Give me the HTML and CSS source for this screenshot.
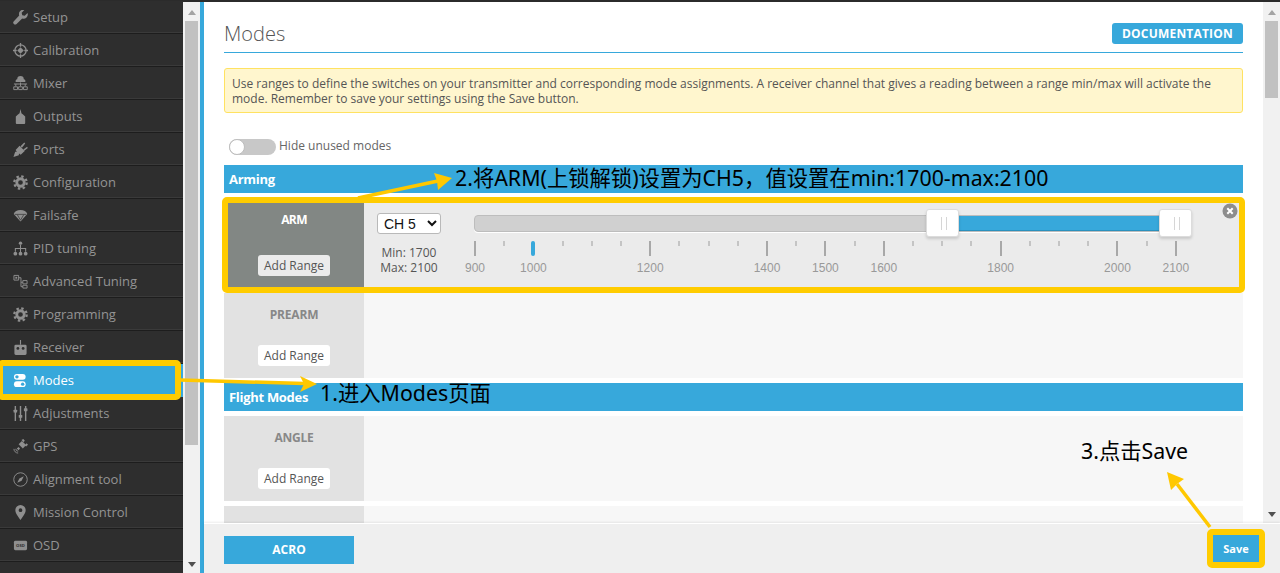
FILE: index.html
```html
<!DOCTYPE html>
<html lang="en">
<head>
<meta charset="utf-8">
<title>Modes</title>
<link rel="stylesheet" href="styles.css">
</head>
<body>
<div class="app">
  <div class="topbar"></div>
  <div class="main">
    <nav class="nav">
      <a class="item"><svg class="ico" viewBox="0 0 16 16"><path d="M15.500 3.200l-3 3-2.600-.7-.7-2.600 3-3a4.600 4.600 0 0 0-5.600 5.900L.9 11.900a2 2 0 0 0 2.900 2.900l6-5.700a4.600 4.600 0 0 0 5.700-5.900z"/></svg>Setup</a>
      <a class="item"><svg class="ico" viewBox="0 0 16 16"><circle cx="8" cy="8" r="6" class="ln" stroke-width="1.400"/><path d="M8 0v4M8 12v4M0 8h4M12 8h4" class="ln" stroke-width="1.400"/><path d="M8 4.500L11.500 8 8 11.500 4.500 8z"/></svg>Calibration</a>
      <a class="item"><svg class="ico" viewBox="0 0 16 16"><path d="M3 6.500a2 2 0 0 1 1.500-3 3.500 3.500 0 0 1 7 0 2 2 0 0 1 1.500 3z"/><path d="M1 8h14v1H1zM2.500 9h1v2h-1zM7.500 7h1v4h-1zM12.500 9h1v2h-1z"/><path d="M.8 11.500h4v3h-4zM6 11.500h4v3H6zM11.200 11.500h4v3h-4z" class="ln" stroke-width="1"/></svg>Mixer</a>
      <a class="item"><svg class="ico" viewBox="0 0 16 16"><path d="M8 0l1 4.500 2 1.500 2 2v7a1 1 0 0 1-1 1H4a1 1 0 0 1-1-1V8l2-2 2-1.500z"/></svg>Outputs</a>
      <a class="item"><svg class="ico" viewBox="0 0 16 16"><path d="M.5 16l1.800-5.500 1.800-.2L2.800 8.500 7 4l5.500 5.500-4.300 4-1.800-1.200-.2 1.800z"/><path d="M8 4.500L12 .5l1 1-3.500 4.500zM11 8l4-3 .8 1.300-3.800 3z"/></svg>Ports</a>
      <a class="item"><svg class="ico" viewBox="0 0 16 16"><circle cx="8" cy="8" r="4" class="ln" stroke-width="3"/><circle cx="8" cy="8" r="6.600" class="ln gear" stroke-width="2.400"/></svg>Configuration</a>
      <a class="item"><svg class="ico" viewBox="0 0 16 16"><path d="M.8 6.500C1.500 3.500 4.500 2 8 2s6.500 1.500 7.200 4.500L8 14.500z"/><path d="M4.500 7L8 13l3.500-6M2 6.800h12" class="ln dark" stroke-width=".7"/></svg>Failsafe</a>
      <a class="item"><svg class="ico" viewBox="0 0 16 16"><circle cx="8" cy="2.300" r="1.800"/><circle cx="2.500" cy="13.500" r="2"/><circle cx="8" cy="13.500" r="2"/><circle cx="13.500" cy="13.500" r="2"/><path d="M8 4v8M2.500 11.500V8h11v3.500" class="ln" stroke-width="1.100"/></svg>PID tuning</a>
      <a class="item"><svg class="ico" viewBox="0 0 16 16"><path d="M1 1.500h5v5H1zM10.500 7h4.500v3.500h-4.500zM10.500 12h4.500v3h-4.500z" class="ln" stroke-width="1"/><path d="M6 4h2.500v9.500h2M8.500 8.800h2" class="ln" stroke-width="1"/><path d="M2.500 3h2v2h-2z"/></svg>Advanced Tuning</a>
      <a class="item"><svg class="ico" viewBox="0 0 16 16"><circle cx="8" cy="8" r="4" class="ln" stroke-width="3"/><circle cx="8" cy="8" r="6.600" class="ln gear" stroke-width="2.400"/></svg>Programming</a>
      <a class="item"><svg class="ico" viewBox="0 0 16 16"><path d="M7.400 0h1.200v5H7.400z"/><path d="M3 5h10a1.500 1.500 0 0 1 1.500 1.500v8A1.500 1.500 0 0 1 13 16H3a1.500 1.500 0 0 1-1.500-1.500v-8A1.500 1.500 0 0 1 3 5z"/><circle cx="5.200" cy="9" r="1.500" class="hole"/><circle cx="10.800" cy="9" r="1.500" class="hole"/></svg>Receiver</a>
      <a class="item active"><svg class="ico" viewBox="0 0 16 16"><rect x="1" y="1" width="12.500" height="6.200" rx="3.100"/><circle cx="4.200" cy="4.100" r="1.800" class="hole"/><rect x="1" y="8.800" width="12.500" height="6.200" rx="3.100"/><circle cx="10.300" cy="11.900" r="1.800" class="hole"/></svg>Modes</a>
      <a class="item"><svg class="ico" viewBox="0 0 16 16"><path d="M2.500 0v16M8 0v16M13.500 0v16" class="ln" stroke-width="1.500"/><rect x=".6" y="4" width="3.800" height="3" rx=".6"/><rect x="6.100" y="9.500" width="3.800" height="3" rx=".6"/><rect x="11.600" y="2.500" width="3.800" height="3" rx=".6"/></svg>Adjustments</a>
      <a class="item"><svg class="ico" viewBox="0 0 16 16"><path d="M9.500 2L14 6.500 10.500 10 6 5.500z"/><path d="M9 1l2-1 1.500 1.500-1 2zM4 10l2-1.500L7.500 10 6 12zM12.500 7l1.500 1 2-2-1.500-1.500z"/><path d="M1 10.500A4.500 4.500 0 0 0 5.500 15M3 10.500A2.500 2.500 0 0 0 5.500 13" class="ln" stroke-width="1"/></svg>GPS</a>
      <a class="item"><svg class="ico" viewBox="0 0 16 16"><circle cx="8" cy="8" r="7.200" class="ln" stroke-width="1"/><path d="M11.500 4.500L9.200 9.200 6.800 6.800zM4.500 11.500L6.800 6.800 9.200 9.200z"/></svg>Alignment tool</a>
      <a class="item"><svg class="ico" viewBox="0 0 16 16"><path fill-rule="evenodd" d="M8 0a5.500 5.500 0 0 1 5.500 5.500C13.500 9 10 13 8 16 6 13 2.500 9 2.500 5.500A5.500 5.500 0 0 1 8 0zm0 3.500a2 2 0 1 0 0 4 2 2 0 0 0 0-4z"/></svg>Mission Control</a>
      <a class="item"><svg class="ico" viewBox="0 0 16 16"><rect x="1" y="3" width="14" height="10" rx="1.500"/><text x="8" y="9.800" class="osd">OSD</text></svg>OSD</a>
      <a class="item"><svg class="ico" viewBox="0 0 16 16"><path d="M8 8a3 3 0 0 1 3 3v5H5v-5a3 3 0 0 1 3-3z"/></svg></a>
    </nav>
    <div class="scrollbar nav-scroll">
      <span class="arrow up"></span>
      <span class="thumb nav-thumb"></span>
      <span class="arrow down push"></span>
    </div>
    <div class="stripe"></div>
    <div class="content">
      <div class="upper">
        <section class="page">
          <header class="page-head">
            <h1 class="title">Modes</h1>
            <a class="doc">DOCUMENTATION</a>
          </header>
          <p class="note">Use ranges to define the switches on your transmitter and corresponding mode assignments. A receiver channel that gives a reading between a range min/max will activate the mode. Remember to save your settings using the Save button.</p>
          <div class="hide-row">
            <span class="toggle"><span class="knob"></span></span>
            <span class="hide-label">Hide unused modes</span>
          </div>
          <h2 class="group">Arming</h2>
          <div class="mode selected">
            <div class="mode-info">
              <span class="mode-name">ARM</span>
              <button class="add">Add Range</button>
            </div>
            <div class="mode-body">
              <div class="range-side">
                <select class="channel"><option>CH 5</option></select>
                <div class="minmax">Min: 1700<br>Max: 2100</div>
              </div>
              <div class="slider">
                <div class="track"><span class="fill"></span></div>
                <span class="handle h-min"></span>
                <span class="handle h-max"></span>
                <div class="scale">
                  <span class="tick big"><b>900</b></span><span class="tick"></span><span class="tick big marker"><b>1000</b></span><span class="tick"></span><span class="tick"></span><span class="tick"></span>
                  <span class="tick big"><b>1200</b></span><span class="tick"></span><span class="tick"></span><span class="tick"></span>
                  <span class="tick big"><b>1400</b></span><span class="tick"></span>
                  <span class="tick big"><b>1500</b></span><span class="tick"></span>
                  <span class="tick big"><b>1600</b></span><span class="tick"></span><span class="tick"></span><span class="tick"></span>
                  <span class="tick big"><b>1800</b></span><span class="tick"></span><span class="tick"></span><span class="tick"></span>
                  <span class="tick big"><b>2000</b></span><span class="tick"></span>
                  <span class="tick big"><b>2100</b></span>
                </div>
              </div>
              <span class="close"><svg viewBox="0 0 16 16" width="16" height="16"><circle cx="8" cy="8" r="7.500" fill="#8d8d8d"/><path d="M5.300 5.300l5.400 5.400M10.700 5.300l-5.400 5.400" stroke="#fff" stroke-width="2"/></svg></span>
            </div>
          </div>
          <div class="mode">
            <div class="mode-info"><span class="mode-name">PREARM</span><button class="add">Add Range</button></div>
            <div class="mode-body"></div>
          </div>
          <h2 class="group">Flight Modes</h2>
          <div class="mode">
            <div class="mode-info"><span class="mode-name">ANGLE</span><button class="add">Add Range</button></div>
            <div class="mode-body"></div>
          </div>
          <div class="mode">
            <div class="mode-info"></div>
            <div class="mode-body"></div>
          </div>
        </section>
        <div class="scrollbar page-scroll">
          <span class="arrow up"></span>
          <span class="thumb page-thumb"></span>
          <span class="arrow down push"></span>
        </div>
      </div>
      <footer class="toolbar">
        <a class="acro">ACRO</a>
        <a class="save">Save</a>
      </footer>
    </div>
  </div>
  <div class="annotations">
    <span class="box box-modes"></span>
    <span class="box box-arm"></span>
    <span class="box box-save"></span>
    <svg class="arrows" viewBox="0 0 1280 573" width="1280" height="573">
      <path d="M180 380L304 383.500" class="shaft"/>
      <path d="M317 384L300 376 304 384 300 392z" class="head"/>
      <path d="M358 198L438 181" class="shaft"/>
      <path d="M452 178L434 173 437 181 438 190z" class="head"/>
      <path d="M1210 527L1177 484" class="shaft"/>
      <path d="M1167 472L1171 490 1177 484 1184 479z" class="head"/>
    </svg>
    <span class="label l-one">1.进入Modes页面</span>
    <span class="label l-two">2.将ARM(上锁解锁)设置为CH5，值设置在min:1700-max:2100</span>
    <span class="label l-three">3.点击Save</span>
  </div>
</div>
</body>
</html>
```

FILE: styles.css
```css
* { box-sizing: border-box; }
html, body { margin: 0; height: 573px; overflow: hidden; background: #fff; }
body { font-family: "Open Sans", "Noto Sans CJK SC", sans-serif; font-size: 12px; color: #555; }

.app { position: relative; width: 1280px; height: 573px; display: flex; flex-direction: column; overflow: hidden; }
.topbar { height: 2px; background: #2b2b2b; flex: none; }
.main { display: flex; flex: 1; min-height: 0; }

/* sidebar */
.nav { width: 183px; flex: none; background: #2e2e2e; overflow: hidden; margin-top: -1px; }
.item { display: flex; align-items: center; height: 33px; color: #949494; font-size: 13px; border-bottom: 1px solid #1d1d1d; box-shadow: inset 0 -1px 0 #3a3a3a; padding-left: 13px; gap: 5px; }
.item.active { background: #37a8db; color: #fff; box-shadow: none; border-bottom-color: #37a8db; }
.ico { width: 15px; height: 15px; flex: none; fill: currentColor; color: #8f8f8f; }
.active .ico { color: #fff; }
.ln { fill: none; stroke: currentColor; }
.ln.dark { stroke: #2e2e2e; }
.ln.gear { stroke-dasharray: 2.600 2.580; }
.hole { fill: #2e2e2e; }
.active .hole { fill: #37a8db; }
.osd { font: 700 4.500px "Open Sans", sans-serif; text-anchor: middle; fill: #2e2e2e; }

/* scrollbars */
.scrollbar { width: 17px; flex: none; background: #f1f1f1; display: flex; flex-direction: column; align-items: center; padding: 8px 0 6px; }
.thumb { width: 13px; background: #c1c1c1; flex: none; margin-top: 6px; }
.nav-thumb { height: 424px; }
.page-thumb { height: 77px; }
.arrow { width: 0; height: 0; border-left: 4px solid transparent; border-right: 4px solid transparent; flex: none; }
.arrow.up { border-bottom: 5px solid #a3a3a3; }
.arrow.down { border-top: 5px solid #505050; }
.push { margin-top: auto; }

.stripe { width: 4px; flex: none; background: #37a8db; }

/* content */
.content { flex: 1; min-width: 0; display: flex; flex-direction: column; }
.upper { flex: 1; min-height: 0; display: flex; }
.page { flex: 1; min-width: 0; padding: 0 20px; overflow: hidden; background: #fff; }
.page-head { height: 51px; display: flex; justify-content: space-between; align-items: flex-start; border-bottom: 1px solid #37a8db; }
.title { margin: 18px 0 0; font-size: 20px; line-height: 28px; font-weight: 300; color: #555; }
.doc { margin-top: 21px; width: 131px; height: 21px; background: #37a8db; color: #fff; border-radius: 3px; font-weight: 700; font-size: 12px; line-height: 21px; text-align: center; letter-spacing: .2px; }
.note { margin: 15px 0 0; height: 45px; padding: 7px 7px 6px; background: #fff6ce; border: 1px solid #ffe261; border-radius: 3px; line-height: 15px; color: #555; }
.hide-row { display: flex; align-items: flex-start; height: 16px; margin: 26px 0 10px; padding-left: 5px; gap: 3px; }
.toggle { width: 47px; height: 16px; border-radius: 8px; background: #c8c8c8; display: block; }
.knob { display: block; width: 16px; height: 16px; border-radius: 50%; background: #fff; border: 1px solid #bdbdbd; }
.hide-label { color: #666; font-size: 12px; font-weight: 500; line-height: 14px; }
.group { margin: 0 0 5px; height: 28px; background: #37a8db; color: #fff; font-size: 13px; font-weight: 700; line-height: 28px; padding-left: 5px; letter-spacing: -.3px; }

.mode { position: relative; display: flex; height: 85px; margin-bottom: 5px; }
.mode:last-child { margin-bottom: 0; }
.mode-info { width: 140px; flex: none; background: #e2e2e2; display: flex; flex-direction: column; align-items: center; padding: 13px 0 12px; }
.mode-name { font-size: 12px; font-weight: 700; color: #888; line-height: 17px; letter-spacing: -.2px; }
.add { margin-top: auto; width: 72px; height: 21px; padding: 0; border: 0; border-radius: 3px; background: #fff; color: #555; font: 12px/21px "Open Sans", sans-serif; }
.mode-body { flex: 1; background: #f7f7f7; }

.mode.selected { height: 90px; }
.selected .mode-info { background: #828784; padding: 13px 0 12px; }
.selected .mode-name { color: #fff; letter-spacing: -.6px; }
.selected .add { background: #ebebeb; }
.selected .mode-body { background: #ebebeb; display: flex; padding: 15px 0 0 13px; position: relative; }
.range-side { width: 64px; flex: none; display: flex; flex-direction: column; }
.channel { width: 64px; height: 21px; font: 14px "Liberation Sans", sans-serif; background: #fff; color: #111; border: 1px solid #b9b9b9; border-radius: 3px; padding: 0 0 0 2px; }
.minmax { margin-top: 11px; text-align: center; line-height: 15px; color: #555; white-space: nowrap; }

.slider { position: relative; margin-left: 33px; width: 717px; height: 70px; }
.track { height: 17px; margin-top: 2px; background: #d0d0d0; border: 1px solid #bdbdbd; border-radius: 4px 0 0 4px; box-shadow: 0 1px 0 #fff; position: relative; }
.fill { position: absolute; left: 484px; right: 30px; top: 0; bottom: 0; background: #37a8db; box-shadow: inset 0 -1px 0 #2a90bd; }
.handle { position: absolute; top: -4px; width: 33px; height: 28px; background: #fff; border: 1px solid #dcdcdc; border-radius: 3px; box-shadow: 0 2px 3px rgba(0,0,0,.15); }
.handle::after { content: ""; position: absolute; left: 14px; top: 7px; width: 4px; height: 13px; border-left: 1px solid #d6d6d6; border-right: 1px solid #d6d6d6; }
.h-min { left: 452px; }
.h-max { left: 685px; }
.scale { display: grid; grid-template-columns: repeat(25, 29.21px); margin: 9px 0 0 1px; }
.tick { position: relative; display: block; height: 28px; }
.tick::before { content: ""; position: absolute; left: -1px; top: 0; width: 2px; height: 5px; background: #c4c4c4; }
.tick.big::before { height: 15px; background: #a8a8a8; }
.tick.marker::before { left: -2px; width: 4px; border-radius: 2px; background: #37a8db; }
.tick b { position: absolute; left: -20px; width: 40px; top: 20px; text-align: center; font: 12px/14px "Liberation Sans", sans-serif; color: #999; }
.close { position: absolute; right: 5px; top: 5px; width: 16px; height: 16px; }
.close svg { display: block; }

/* bottom */
.toolbar { height: 50px; flex: none; background: #efefef; border-top: 1px solid #fff; box-shadow: 0 -1px 2px rgba(0,0,0,.08); display: flex; justify-content: space-between; padding: 12px 21px 0 20px; position: relative; }
.acro { width: 130px; height: 28px; background: #37a8db; color: #fff; font-weight: 700; font-size: 12px; line-height: 28px; text-align: center; }
.save { width: 46px; height: 27px; margin-top: -1px; background: #37a8db; color: #fff; font-weight: 700; font-size: 11px; line-height: 27px; text-align: center; }

/* annotations drawn over the screenshot */
.annotations { position: absolute; inset: 0; pointer-events: none; }
.box { position: absolute; border: 6px solid #ffcc00; border-radius: 5px; }
.box-modes { left: -3px; top: 360px; width: 184px; height: 40px; }
.box-arm { left: 222px; top: 197px; width: 1023px; height: 96px; }
.box-save { left: 1207px; top: 529px; width: 58px; height: 39px; }
.arrows { position: absolute; left: 0; top: 0; }
.shaft { fill: none; stroke: #ffc800; stroke-width: 3.500; }
.head { fill: #ffc800; }
.label { position: absolute; color: #000; white-space: nowrap; font: 21.330px/28px "Noto Sans", "Noto Sans CJK SC", sans-serif; }
.l-one { left: 320px; top: 379px; }
.l-two { left: 455px; top: 164px; }
.l-three { left: 1081px; top: 437px; }
```
